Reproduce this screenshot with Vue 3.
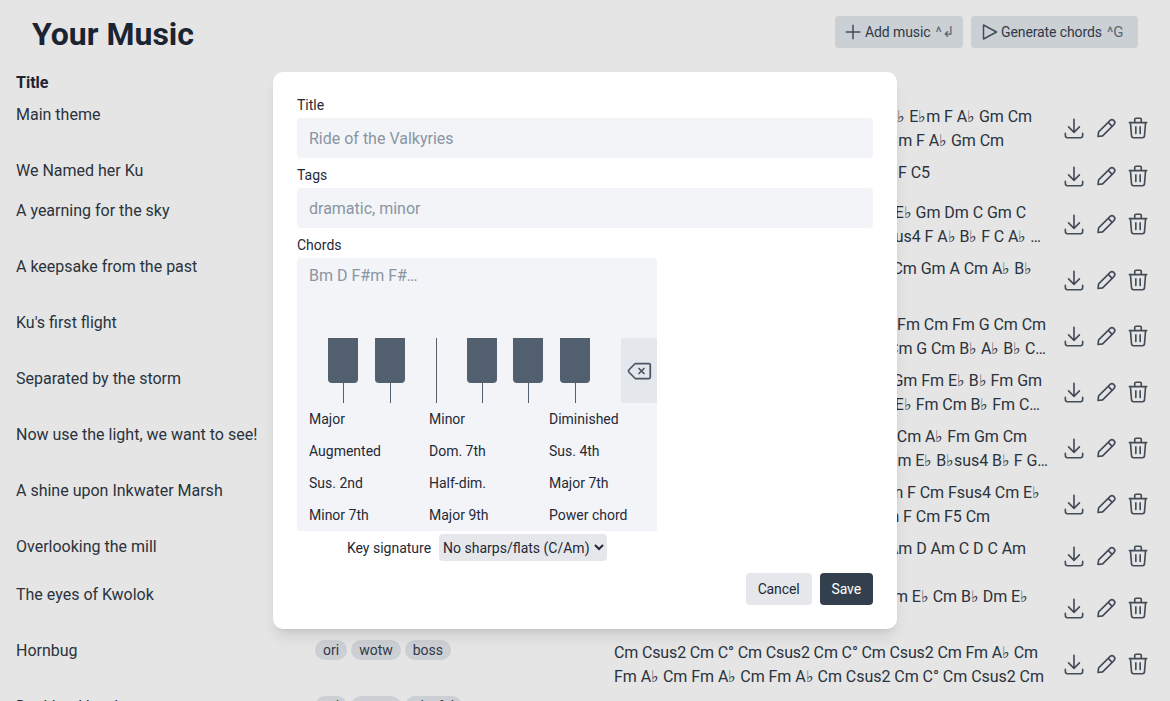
<script setup>
const rows = [
  { title: 'Main theme', tags: ['ori', 'bf'], lines: [{ t: 'Cm Fm A♭ E♭m F A♭ Gm Cm', w: 418 }, { t: 'Cm Fm A♭ E♭m F A♭ Gm Cm', w: 390 }] },
  { title: 'We Named her Ku', tags: ['ori', 'bf'], lines: [{ t: 'Cm Fm E♭ Dm F C5', w: 316 }] },
  { title: 'A yearning for the sky', tags: ['ori', 'bf'], lines: [{ t: 'Cm Gm E♭ Gm Dm C Gm C', w: 412 }, { t: 'Gm Fsus4 F A♭ B♭ F C A♭ …', w: 427 }] },
  { title: 'A keepsake from the past', tags: ['ori', 'bf'], lines: [{ t: 'Cm Fm Cm Gm A Cm A♭ B♭', w: 418 }, { t: ' ', w: 100 }] },
  { title: "Ku's first flight", tags: ['ori', 'bf'], lines: [{ t: 'Cm G Fm Cm Fm G Cm Cm', w: 432 }, { t: 'Fm Cm G Cm B♭ A♭ B♭ C…', w: 432 }] },
  { title: 'Separated by the storm', tags: ['ori', 'bf'], lines: [{ t: 'Cm Gm Fm E♭ B♭ Fm Gm', w: 428 }, { t: 'Fm E♭ Fm Cm B♭ Fm C…', w: 426 }] },
  { title: 'Now use the light, we want to see!', tags: ['ori', 'bf'], lines: [{ t: 'Gm Fm Cm A♭ Fm Gm Cm', w: 413 }, { t: 'Cm Fm E♭ B♭sus4 B♭ F G…', w: 434 }] },
  { title: 'A shine upon Inkwater Marsh', tags: ['ori', 'wotw'], lines: [{ t: 'Cm Fm F Cm Fsus4 Cm E♭', w: 426 }, { t: 'Cm Fm F Cm F5 Cm', w: 376 }] },
  { title: 'Overlooking the mill', tags: ['ori', 'wotw'], wide: true, lines: [{ t: 'C D Am D Am C D C Am', w: 412 }] },
  { title: 'The eyes of Kwolok', tags: ['ori', 'wotw'], lines: [{ t: 'Cm Gm E♭ Cm B♭ Dm E♭', w: 414 }, { t: ' ', w: 100 }] },
  { title: 'Hornbug', tags: ['ori', 'wotw', 'boss'], lines: [{ t: 'Cm Csus2 Cm C° Cm Csus2 Cm C° Cm Csus2 Cm Fm A♭ Cm', w: 424, ls: -0.14 }, { t: 'Fm A♭ Cm Fm A♭ Cm Fm A♭ Cm Csus2 Cm C° Cm Csus2 Cm', w: 430, ls: -0.04 }] },
  { title: 'Duskland battle', tags: ['ori', 'wotw', 'playful'], lines: [{ t: 'Cm Fm', w: 100 }] }
]
const whiteKeys = [0, 1, 2, 3, 4, 5, 6]
const blackKeys = [31, 78, 170, 216, 263]
const chordTypes = ['Major', 'Minor', 'Diminished', 'Augmented', 'Dom. 7th', 'Sus. 4th', 'Sus. 2nd', 'Half-dim.', 'Major 7th', 'Minor 7th', 'Major 9th', 'Power chord']
const lineStyle = (l) => ({ width: l.w + 'px', letterSpacing: (l.ls ?? -0.06) + 'px' })
</script>

<template>
  <div class="page">
    <header class="top">
      <h1>Your Music</h1>
      <div class="top-actions">
        <button class="top-btn add">
          <svg class="btn-icon" viewBox="0 0 20 20"><path d="M10 3.2v13.6M3.2 10h13.6" /></svg>
          <span>Add music</span><span class="hint">^↲</span>
        </button>
        <button class="top-btn gen">
          <svg class="btn-icon" viewBox="0 0 20 20"><path d="M4.5 3v14l13-7z" /></svg>
          <span>Generate chords</span><span class="hint">^G</span>
        </button>
      </div>
    </header>

    <div class="table">
      <div class="row head">
        <div class="title-cell">Title</div>
      </div>
      <div v-for="r in rows" :key="r.title" class="row" :class="{ wide: r.wide }">
        <div class="title-cell">{{ r.title }}</div>
        <div class="tags">
          <span v-for="t in r.tags" :key="t" class="tag">{{ t }}</span>
        </div>
        <div class="chords">
          <div v-for="(l, i) in r.lines" :key="i" class="line" :style="lineStyle(l)">{{ l.t }}</div>
        </div>
        <div class="actions">
          <svg viewBox="0 0 24 24"><path d="M4 17v2a2 2 0 0 0 2 2h12a2 2 0 0 0 2-2v-2M7 11l5 5 5-5M12 4v12" /></svg>
          <svg viewBox="0 0 24 24"><path d="M4.6 19.8l.6-4.2L15.6 5.2a2.6 2.6 0 0 1 3.7 3.7L8.9 19.3zM14 6.8l3.7 3.7" /></svg>
          <svg viewBox="0 0 24 24"><path d="M4 7h16M10 11v6M14 11v6M5 7l1 12a2 2 0 0 0 2 2h8a2 2 0 0 0 2-2l1-12M9 7V4a1 1 0 0 1 1-1h4a1 1 0 0 1 1 1v3" /></svg>
        </div>
      </div>
    </div>

    <div class="overlay">
      <div class="modal">
        <label class="lbl">Title</label>
        <input class="input" placeholder="Ride of the Valkyries" />
        <label class="lbl">Tags</label>
        <input class="input" placeholder="dramatic, minor" />
        <label class="lbl">Chords</label>
        <div class="chord-box">
          <textarea class="area" placeholder="Bm D F#m F#…"></textarea>
          <div class="piano-row">
            <div class="piano">
              <div v-for="k in whiteKeys" :key="k" class="white"></div>
              <div v-for="b in blackKeys" :key="b" class="black" :style="{ left: b + 'px' }"></div>
            </div>
            <div class="del">
              <svg viewBox="0 0 24 24"><path d="M20 6a1 1 0 0 1 1 1v10a1 1 0 0 1-1 1H9l-5-5a1.5 1.5 0 0 1 0-2l5-5zM12 10l4 4m0-4-4 4" /></svg>
            </div>
          </div>
          <div class="types">
            <div v-for="c in chordTypes" :key="c" class="type">{{ c }}</div>
          </div>
        </div>
        <div class="key-row">
          <span>Key signature</span>
          <select class="select">
            <option>No sharps/flats (C/Am)</option>
          </select>
        </div>
        <div class="foot">
          <button class="cancel">Cancel</button>
          <button class="save">Save</button>
        </div>
      </div>
    </div>
  </div>
</template>

<style scoped>
.page {
  height: 701px;
  overflow: hidden;
  position: relative;
  background: #fff;
  color: #2f3946;
  font: 16px/24px Roboto, "Noto Sans", sans-serif;
}
.top {
  display: flex;
  justify-content: space-between;
  align-items: center;
  box-sizing: border-box;
  padding: 16px 32px 0;
  height: 48px;
}
h1 {
  margin: 4px 0 0;
  font-size: 32px;
  line-height: 36px;
  font-weight: 700;
  color: #1f2937;
}
.top-actions { display: flex; gap: 8px; }
.top-btn {
  display: flex;
  align-items: center;
  height: 32px;
  padding: 0 0 0 8px;
  border: 0;
  border-radius: 4px;
  background: #e2e8ee;
  color: #374151;
  font: 14px/20px Roboto, "Noto Sans", sans-serif;
  letter-spacing: -.1px;
  white-space: pre;
}
.add { width: 128px; }
.gen { width: 167px; }
.hint { color: #6b7280; margin-left: 5px; font-size: 15px; letter-spacing: 0; }
.btn-icon {
  width: 20px;
  height: 20px;
  margin-right: 2px;
  fill: none;
  stroke: #4b5563;
  stroke-width: 1.5;
  stroke-linecap: round;
  stroke-linejoin: round;
}
.table { padding: 22px 16px 0; }
.row {
  display: grid;
  grid-template-columns: 299px 299px 442px 1fr;
  min-height: 40px;
  align-items: start;
}
.row.head { min-height: 30px; height: 30px; font-weight: 700; }
.row.wide { min-height: 48px; }
.row.head .title-cell { padding: 1px 0 0; color: #1f2937; }
.title-cell { padding-top: 3px; }
.tags { display: flex; gap: 4px; padding-top: 4px; }
.tag {
  height: 20px;
  padding: 0 8px;
  border-radius: 10px;
  background: #e4e7eb;
  font-size: 14px;
  line-height: 20px;
  color: #374151;
}
.chords { padding: 5px 0 3px; }
.line {
  display: flex;
  justify-content: flex-end;
  height: 24px;
  white-space: pre;
}
.actions {
  display: flex;
  gap: 6px;
  padding-left: 5px;
  align-self: center;
}
.actions svg {
  width: 26px;
  height: 26px;
  flex: none;
  fill: none;
  stroke: #4b5563;
  stroke-width: 1.5;
  stroke-linecap: round;
  stroke-linejoin: round;
}
.overlay {
  position: absolute;
  inset: 0;
  display: flex;
  align-items: center;
  justify-content: center;
  background: rgba(0, 0, 0, .1);
}
.modal {
  width: 624px;
  height: 557px;
  box-sizing: border-box;
  padding: 24px;
  background: #fff;
  border-radius: 10px;
  box-shadow: 0 10px 15px -3px rgba(0, 0, 0, .1), 0 4px 6px -4px rgba(0, 0, 0, .1);
  font-size: 14px;
  line-height: 20px;
  color: #1f2937;
}
.lbl { display: block; height: 22px; line-height: 18px; }
.input {
  display: block;
  box-sizing: border-box;
  width: 100%;
  height: 40px;
  margin-bottom: 8px;
  padding: 0 12px;
  border: 0;
  border-radius: 4px;
  outline: 0;
  background: #f3f4f8;
  font: 16px/24px Roboto, "Noto Sans", sans-serif;
}
.input::placeholder, .area::placeholder { color: #8a94a3; opacity: 1; }
.chord-box {
  width: 360px;
  height: 273px;
  overflow: hidden;
  background: #f3f4f8;
  border-radius: 4px 4px 0 0;
}
.area {
  display: block;
  width: 100%;
  height: 80px;
  padding: 6px 12px;
  box-sizing: border-box;
  border: 0;
  outline: 0;
  resize: none;
  background: transparent;
  font: 16px/24px Roboto, "Noto Sans", sans-serif;
}
.piano-row { display: flex; height: 65px; }
.piano { position: relative; display: flex; width: 324px; }
.white { flex: 1; box-sizing: border-box; border-left: 1px solid #52606d; }
.white:first-child { border-left-color: transparent; }
.black {
  position: absolute;
  top: 0;
  width: 30px;
  height: 45px;
  background: #525f6e;
  border-radius: 0 0 4px 4px;
}
.del {
  width: 36px;
  display: flex;
  align-items: center;
  justify-content: center;
  background: #e4e7eb;
}
.del svg { width: 30px; height: 30px; flex: none; fill: none; stroke: #4b5563; stroke-width: 1.4; stroke-linecap: round; stroke-linejoin: round; }
.types {
  display: grid;
  grid-template-columns: 120px 120px 120px;
  grid-auto-rows: 32px;
  padding-left: 12px;
}
.type { line-height: 32px; }
.key-row {
  display: flex;
  justify-content: center;
  align-items: center;
  gap: 8px;
  width: 360px;
  height: 27px;
  margin-top: 3px;
}
.select {
  box-sizing: border-box;
  width: 168px;
  height: 27px;
  padding: 0;
  border: 0;
  border-radius: 4px;
  outline: 0;
  background-color: #e5e7eb;
  color: #1f2937;
  font: 14px/20px Roboto, "Noto Sans", sans-serif;
}
.foot {
  display: flex;
  justify-content: flex-end;
  gap: 8px;
  margin-top: 12px;
}
.foot button {
  height: 32px;
  padding: 0 12px;
  border: 0;
  border-radius: 4px;
  font: 14px/20px Roboto, "Noto Sans", sans-serif;
  letter-spacing: -.12px;
}
.cancel { background: #e5e7eb; color: #1f2937; }
.save { background: #333f4d; color: #fff; }
</style>
